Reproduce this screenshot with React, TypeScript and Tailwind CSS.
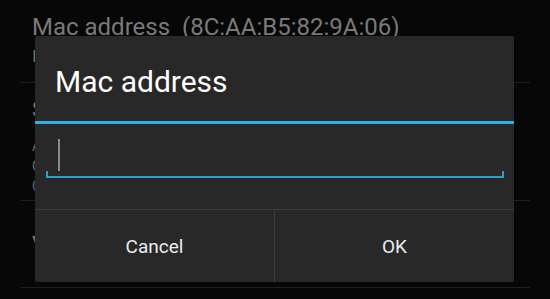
import React from "react";

export default function App() {
  return (
    <div
      className="relative w-[550px] h-[299px] overflow-hidden bg-[#070707]"
      style={{ fontFamily: "Roboto, 'Noto Sans', sans-serif" }}
    >
      {/* Background settings list */}
      <div className="flex flex-col">
        <div className="h-[82px] pl-[32px] pt-[15px] flex flex-col">
          <div className="text-[24px] leading-none text-[#7a7a7a] whitespace-pre">
            {"Mac address  (8C:AA:B5:82:9A:06)"}
          </div>
          <div className="mt-[9px] text-[17px] leading-none text-[#6a6a6a]">
            IP address (192.168.1.5)
          </div>
        </div>
        <div className="mx-[20px] h-px bg-[#1e1e1e]" />
        <div className="h-[117px] pl-[32px] pt-[16px] flex flex-col">
          <div className="text-[22px] leading-none text-[#7a7a7a]">Speed</div>
          <div className="mt-[15px] text-[14px] leading-[20px] text-[#6a6a6a]">
            <div>Available networks</div>
            <div>Guest network</div>
            <div>Connected</div>
          </div>
        </div>
        <div className="mx-[20px] h-px bg-[#1e1e1e]" />
        <div className="h-[86px] pl-[32px] pt-[32px]">
          <div className="text-[24px] leading-none text-[#7a7a7a]">Version</div>
        </div>
        <div className="mx-[20px] h-px bg-[#1e1e1e]" />
      </div>

      {/* Dialog */}
      <div className="absolute left-[35px] top-[36px] w-[479px] h-[246px] rounded-[2px] bg-[#282828] flex flex-col">
        <div className="h-[85px] pl-[20px] pt-[31px]">
          <div className="text-[30px] leading-none text-white">Mac address</div>
        </div>
        <div className="h-[3px] bg-[#33b0df]" />
        <div className="h-[85px] relative">
          <div className="absolute left-[23px] top-[15px] w-[2px] h-[32px] bg-[#8a8a8a]" />
          <div className="absolute left-[11px] top-[47px] w-[458px] h-[7px] border-l-2 border-r-2 border-b-2 border-[#2a9fcb]" />
        </div>
        <div className="h-px bg-[#3e3e3e]" />
        <div className="flex-1 flex">
          <div className="flex-1 flex items-center justify-center pt-[1px] text-[19px] leading-none text-[#ececec]">
            Cancel
          </div>
          <div className="w-px bg-[#3e3e3e]" />
          <div className="flex-1 flex items-center justify-center pt-[1px] text-[19px] leading-none text-[#ececec]">
            OK
          </div>
        </div>
      </div>
    </div>
  );
}
